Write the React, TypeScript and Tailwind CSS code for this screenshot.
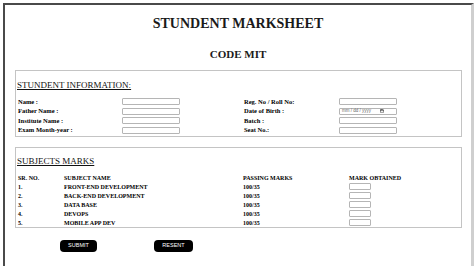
import { Calendar } from "lucide-react";

const serif = { fontFamily: '"Liberation Serif", "Times New Roman", serif' };

const Field = () => (
  <div className="w-[58px] h-[7px] border border-[#b5b5b5] rounded-[1px] bg-white" />
);

const DateField = () => (
  <div className="w-[58px] h-[7px] border border-[#b5b5b5] rounded-[1px] bg-white flex items-center justify-between px-[2px]">
    <span className="text-[4.5px] leading-none text-[#666]" style={{ fontFamily: '"Liberation Sans", Arial, sans-serif' }}>
      mm / dd / yyyy
    </span>
    <Calendar className="w-[4px] h-[4px] mr-[10px] text-[#333]" strokeWidth={3} />
  </div>
);

const leftRows = ["Name :", "Father Name :", "Institute Name :", "Exam Month-year :"];
const rightRows = ["Reg. No / Roll No:", "Date of Birth :", "Batch :", "Seat No.:"];

const subjects = [
  { no: "1.", name: "FRONT-END DEVELOPMENT" },
  { no: "2.", name: "BACK-END DEVELOPMENT" },
  { no: "3.", name: "DATA BASE" },
  { no: "4.", name: "DEVOPS" },
  { no: "5.", name: "MOBILE APP DEV" },
];

export default function App() {
  return (
    <div className="w-[474px] h-[266px] overflow-hidden bg-white" style={serif}>
      <div className="ml-[3px] mt-[3px] w-[471px] h-[270px] border-l-2 border-t-2 border-[#4a4a4a] border-r-[3px] border-r-[#cfcfcf]">
        <div className="h-[38px] flex items-center justify-center">
          <h1 className="text-[14px] font-bold text-[#1a1a1a] leading-none">STUNDENT MARKSHEET</h1>
        </div>
        <div className="h-[22px] flex items-center justify-center">
          <h2 className="text-[11px] font-bold text-[#1a1a1a] leading-none">CODE MIT</h2>
        </div>

        {/* student information */}
        <div className="mt-[5px] ml-[10px] w-[447px] border border-[#c4c4c4] pl-[1px] pt-[9px] pb-[1px]">
          <div className="h-[10px] flex items-center">
            <span className="text-[9px] leading-none underline text-[#111]">STUNDENT INFORMATION:</span>
          </div>
          <div className="mt-[7px] flex">
            <div className="w-[227px]">
              {leftRows.map((l) => (
                <div key={l} className="h-[9.5px] flex items-center">
                  <span className="w-[105px] pl-[1px] text-[6.5px] font-bold leading-none">{l}</span>
                  <Field />
                </div>
              ))}
            </div>
            <div>
              {rightRows.map((l) => (
                <div key={l} className="h-[9.5px] flex items-center">
                  <span className="w-[95px] text-[6.5px] font-bold leading-none">{l}</span>
                  {l.startsWith("Date") ? <DateField /> : <Field />}
                </div>
              ))}
            </div>
          </div>
        </div>

        {/* subjects marks */}
        <div className="mt-[10px] ml-[10px] w-[447px] border border-[#c4c4c4] pl-[1px] pt-[8px]">
          <div className="h-[10px] flex items-center">
            <span className="text-[9px] leading-none underline text-[#111]">SUBJECTS MARKS</span>
          </div>
          <div className="mt-[7px]">
            <div className="h-[9px] flex items-center text-[6px] font-bold leading-none">
              <span className="w-[47px] pl-[1px]">SR. NO.</span>
              <span className="w-[179px]">SUBJECT NAME</span>
              <span className="w-[106px]">PASSING MARKS</span>
              <span>MARK OBTAINED</span>
            </div>
            {subjects.map((s) => (
              <div key={s.no} className="h-[9px] flex items-center text-[6px] font-bold leading-none">
                <span className="w-[47px] pl-[1px]">{s.no}</span>
                <span className="w-[179px]">{s.name}</span>
                <span className="w-[106px]">100/35</span>
                <div className="w-[22px] h-[7px] border border-[#b5b5b5] rounded-[1px]" />
              </div>
            ))}
          </div>
        </div>

        <div className="mt-[12px] ml-[55px] flex gap-[57px]" style={{ fontFamily: '"Liberation Sans", Arial, sans-serif' }}>
          <button className="w-[37px] h-[12px] bg-black text-white text-[5.5px] rounded-[4px] leading-none">SUBMIT</button>
          <button className="w-[39px] h-[12px] bg-black text-white text-[5.5px] rounded-[4px] leading-none">RESENT</button>
        </div>
      </div>
    </div>
  );
}
